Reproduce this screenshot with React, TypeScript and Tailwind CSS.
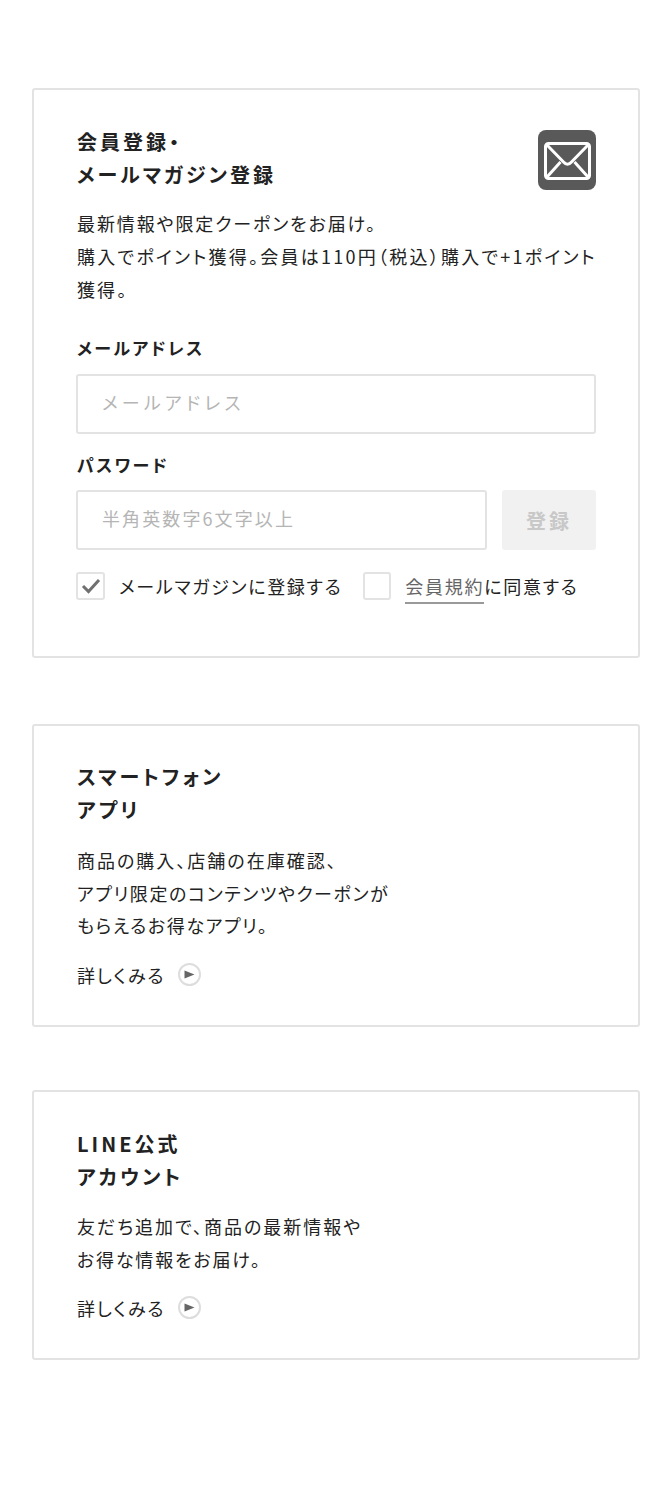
const fontStack = "font-['Noto_Sans_CJK_JP','Noto_Sans',sans-serif] [font-feature-settings:'palt']";

function ArrowLink() {
  return (
    <a className="flex items-center text-[18px] leading-[34px] tracking-[1.6px] text-[#222]">
      詳しくみる
      <span className="ml-[13px] -mt-[1px] w-[23px] h-[23px] rounded-full border-2 border-[#ddd] flex items-center justify-center">
        <svg width="11" height="9" viewBox="0 0 11 9">
          <path d="M0.5 0.5 L10.5 4.5 L0.5 8.5 Z" fill="#666" />
        </svg>
      </span>
    </a>
  );
}

function Title({ lines }: { lines: string[] }) {
  return (
    <h2 className="text-[20px] leading-[33px] font-bold tracking-[3px] text-[#222]">
      {lines.map((l) => (
        <div key={l}>{l}</div>
      ))}
    </h2>
  );
}

function MailIcon() {
  return (
    <div className="w-[58px] h-[60px] rounded-[8px] bg-[#595959] flex items-center justify-center pt-[2px]">
      <svg width="47" height="38" viewBox="0 0 47 38" fill="none" stroke="#fff" strokeWidth="3">
        <rect x="1.5" y="1.5" width="44" height="35" rx="3" />
        <path d="M3 3 L19.5 20 Q23.5 24.5 27.5 20 L44 3" />
        <path d="M3 35 L16.5 20 M44 35 L30.5 20" />
      </svg>
    </div>
  );
}

export default function App() {
  return (
    <div className={`${fontStack} min-h-[1488px] bg-white pt-[88px] pl-[32px] pr-[31px]`}>
      <section className="h-[570px] border-2 border-[#e3e3e3] rounded-[3px] pt-[35px] pl-[43px] pr-[42px]">
        <div className="flex justify-between items-start">
          <Title lines={["会員登録・", "メールマガジン登録"]} />
          <div className="mt-[5px]">
            <MailIcon />
          </div>
        </div>
        <p className="mt-[16px] text-[18px] leading-[33px] text-[#222]">
          <span className="block tracking-[1.9px]">最新情報や限定クーポンをお届け。</span>
          <span className="block tracking-[2.25px] whitespace-nowrap">購入でポイント獲得。会員は110円（税込）購入で+1ポイント</span>
          <span className="block tracking-[2.1px]">獲得。</span>
        </p>
        <label className="block mt-[27px] text-[17px] leading-[30px] font-bold tracking-[2.4px] text-[#222]">
          メールアドレス
        </label>
        <div className="-ml-[1px] mt-[11px] h-[60px] border-2 border-[#e3e3e3] rounded-[3px] pl-[24px] pb-[3px] flex items-center text-[18px] tracking-[4.2px] text-[#b5b5b5]">
          メールアドレス
        </div>
        <label className="block mt-[16px] text-[17px] leading-[30px] font-bold tracking-[2.4px] text-[#222]">
          パスワード
        </label>
        <div className="-ml-[1px] mt-[10px] flex gap-[15px]">
          <div className="flex-1 h-[60px] border-2 border-[#e3e3e3] rounded-[3px] pl-[24px] pb-[3px] flex items-center text-[18px] tracking-[2.1px] text-[#b5b5b5]">
            半角英数字6文字以上
          </div>
          <button className="w-[94px] h-[60px] rounded-[3px] bg-[#f1f1f1] pt-[2px] text-[20px] font-bold tracking-[3px] text-[#c8c8c8]">
            登録
          </button>
        </div>
        <div className="-ml-[1px] mt-[21px] flex items-center text-[18px] leading-[28px] tracking-[1.7px] text-[#222]">
          <span className="w-[29px] h-[28px] border-2 border-[#e3e3e3] rounded-[3px] flex items-center justify-center">
            <svg width="20" height="16" viewBox="0 0 20 16" fill="none" stroke="#707070" strokeWidth="3">
              <path d="M2 8 L7.5 13.5 L18 2" />
            </svg>
          </span>
          <span className="ml-[14px]">メールマガジンに登録する</span>
          <span className="ml-[21px] w-[28px] h-[28px] border-2 border-[#e3e3e3] rounded-[3px]" />
          <span className="ml-[14px]">
            <a className="inline-block text-[#666] border-b-2 border-[#999] leading-[31px] -mb-[3px]">会員規約</a>
            に同意する
          </span>
        </div>
      </section>

      <section className="mt-[66px] h-[303px] border-2 border-[#e3e3e3] rounded-[3px] pt-[34px] pl-[43px] pr-[42px]">
        <Title lines={["スマートフォン", "アプリ"]} />
        <p className="mt-[18px] text-[18px] leading-[32.5px] text-[#222]">
          <span className="block tracking-[2px]">商品の購入、店舗の在庫確認、</span>
          <span className="block tracking-[1.6px]">アプリ限定のコンテンツやクーポンが</span>
          <span className="block tracking-[1.6px]">もらえるお得なアプリ。</span>
        </p>
        <div className="mt-[16px]">
          <ArrowLink />
        </div>
      </section>

      <section className="mt-[63px] h-[270px] border-2 border-[#e3e3e3] rounded-[3px] pt-[35px] pl-[43px] pr-[42px]">
        <Title lines={["LINE公式", "アカウント"]} />
        <p className="mt-[17px] text-[18px] leading-[32.5px] text-[#222]">
          <span className="block tracking-[2px]">友だち追加で、商品の最新情報や</span>
          <span className="block tracking-[1.8px]">お得な情報をお届け。</span>
        </p>
        <div className="mt-[16px]">
          <ArrowLink />
        </div>
      </section>
    </div>
  );
}
